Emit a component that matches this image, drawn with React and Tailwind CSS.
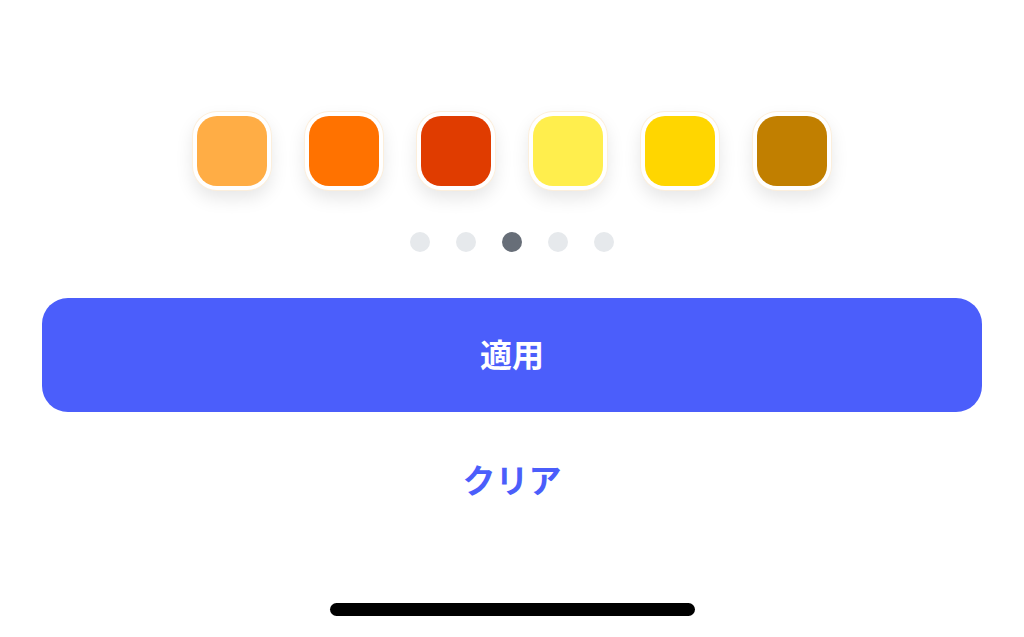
import React from "react";

const colors = ["#FFAD45", "#FF7200", "#E03C00", "#FFEE4D", "#FFD600", "#C17F00"];

function Swatch({ color }) {
  return (
    <div className="w-[78px] h-[78px] rounded-[24px] bg-white p-[4px] shadow-[0_8px_18px_rgba(0,0,0,0.10)] ring-1 ring-[#fcefdc]">
      <div className="w-full h-full rounded-[20px]" style={{ backgroundColor: color }} />
    </div>
  );
}

export default function App() {
  const font = { fontFamily: '"Noto Sans CJK JP", "Noto Sans", sans-serif' };
  return (
    <div className="w-[1024px] h-[637px] bg-white flex flex-col items-center overflow-hidden" style={font}>
      <div className="mt-[112px] flex gap-[34px]">
        {colors.map((c) => (
          <Swatch key={c} color={c} />
        ))}
      </div>
      <div className="mt-[42px] flex gap-[26px]">
        {[0, 1, 2, 3, 4].map((i) => (
          <div
            key={i}
            className={
              "w-[20px] h-[20px] rounded-full " + (i === 2 ? "bg-[#676E78]" : "bg-[#E6E9EC]")
            }
          />
        ))}
      </div>
      <button className="mt-[46px] w-[940px] h-[114px] rounded-[26px] bg-[#4B5EFB] text-white text-[32px] leading-none font-bold flex items-center justify-center pb-[4px]">
        適用
      </button>
      <button className="mt-[34px] h-[68px] px-6 text-[#4B5EFB] text-[33px] leading-none font-bold flex items-center justify-center pb-[2px]">
        クリア
      </button>
      <div className="mt-[89px] w-[365px] h-[13px] rounded-full bg-black" />
    </div>
  );
}
